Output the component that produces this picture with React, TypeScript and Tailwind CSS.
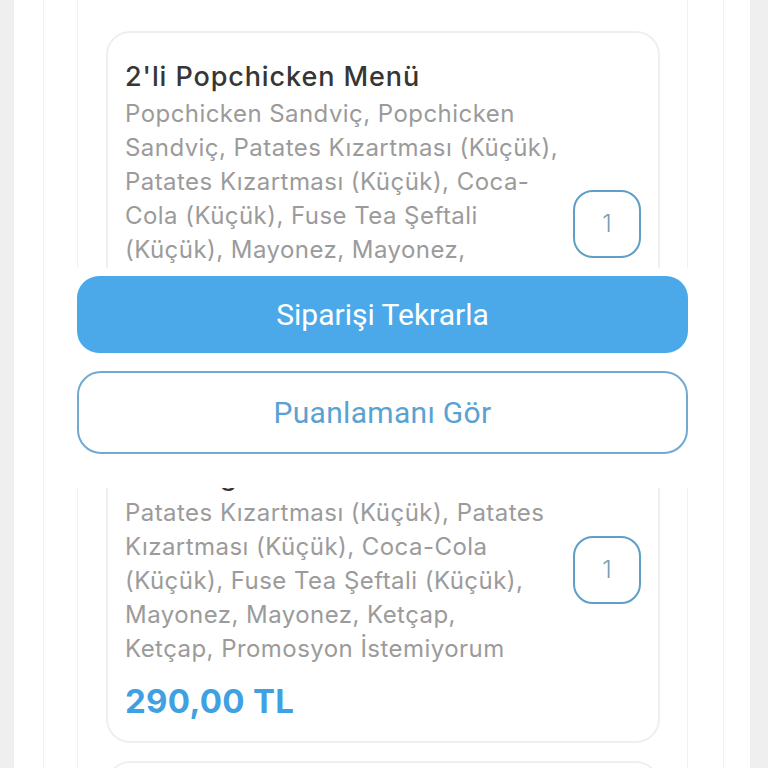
import React from 'react';

type Item = {
  title: string;
  lines: string[];
  price: string;
  qty: number;
  badgeClass: string;
};

const items: Item[] = [
  {
    title: "2'li Popchicken Menü",
    lines: [
      'Popchicken Sandviç, Popchicken',
      'Sandviç, Patates Kızartması (Küçük),',
      'Patates Kızartması (Küçük), Coca-',
      'Cola (Küçük), Fuse Tea Şeftali',
      '(Küçük), Mayonez, Mayonez,',
      'Ketçap, Ketçap, Promosyon',
      'İstemiyorum',
    ],
    price: '290,00 TL',
    qty: 1,
    badgeClass: 'mt-0',
  },
  {
    title: "2'li King Chicken Menü",
    lines: [
      'Patates Kızartması (Küçük), Patates',
      'Kızartması (Küçük), Coca-Cola',
      '(Küçük), Fuse Tea Şeftali (Küçük),',
      'Mayonez, Mayonez, Ketçap,',
      'Ketçap, Promosyon İstemiyorum',
    ],
    price: '290,00 TL',
    qty: 1,
    badgeClass: 'mb-[38px]',
  },
  {
    title: "2'li Popchicken Menü",
    lines: ['Popchicken Sandviç, Popchicken'],
    price: '290,00 TL',
    qty: 1,
    badgeClass: 'mt-0',
  },
];

const OrderItemCard: React.FC<{ item: Item }> = ({ item }) => (
  <div className="flex items-center justify-between rounded-[24px] border-2 border-[#efefef] bg-white pl-[17px] pr-[17px] pt-[24px] pb-[20px]">
    <div className="flex flex-col">
      <h3 className="text-[27px] leading-[40px] font-medium text-[#363636] tracking-[0.9px]">{item.title}</h3>
      <p className="text-[24px] leading-[34px] tracking-[0.45px] text-[#9b9b9b]">
        {item.lines.map((l, i) => (
          <span key={i} className="block whitespace-nowrap">
            {l}
          </span>
        ))}
      </p>
      <span className="mt-[15px] text-[33px] leading-[40px] font-bold tracking-[0.3px] text-[#3fa0e2]">{item.price}</span>
    </div>
    <div
      className={`flex h-[68px] w-[68px] shrink-0 items-center justify-center rounded-[20px] border-2 border-[#5f9ec6] text-[24px] font-light text-[#7a9db3] ${item.badgeClass}`}
    >
      {item.qty}
    </div>
  </div>
);

export default function App() {
  return (
    <div className="h-[768px] w-[768px] overflow-hidden bg-[#efefef] font-['Inter',sans-serif]">
      <div className="relative ml-[14px] h-full w-[736px] bg-white pl-[29px] pr-[26px]">
        <div className="h-full border-x border-[#f0f0f0] pl-[33px] pr-[35px]">
          <div className="flex h-full flex-col gap-[18px] border-x border-[#f1f1f1] pl-[28px] pr-[27px] pt-[31px]">
            {items.map((it, i) => (
              <OrderItemCard key={i} item={it} />
            ))}
          </div>
        </div>

        {/* bottom action sheet lying over the list */}
        <div className="absolute left-[30px] right-[27px] top-[268px] flex h-[220px] flex-col gap-[18px] bg-white pl-[33px] pr-[35px] pt-[8px] font-['Roboto',sans-serif]">
          <button className="flex h-[77px] w-full items-center justify-center rounded-[22px] bg-[#4ca9e9] text-[30px] text-white">
            Siparişi Tekrarla
          </button>
          <button className="flex h-[83px] w-full items-center justify-center rounded-[24px] border-2 border-[#73a9cf] bg-white text-[30px] tracking-[0.3px] text-[#5aa2d2]">
            Puanlamanı Gör
          </button>
        </div>
      </div>
    </div>
  );
}
